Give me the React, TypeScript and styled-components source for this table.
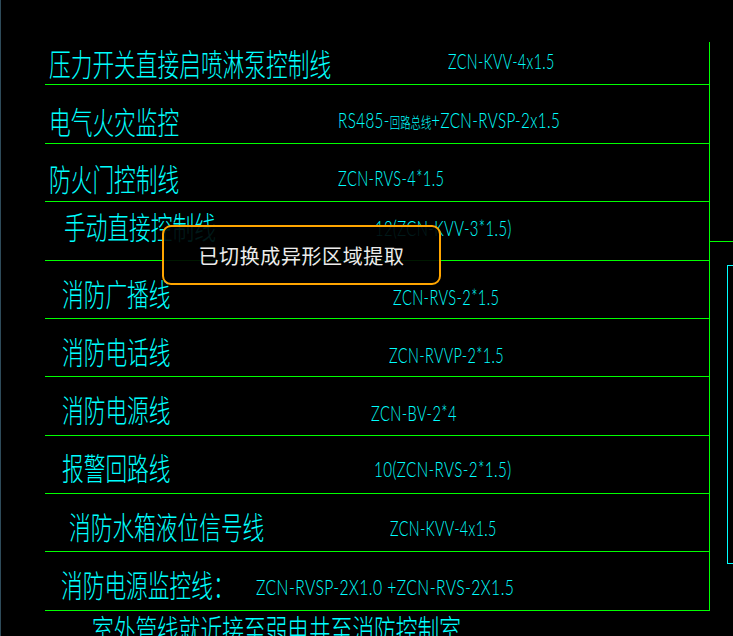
import React from "react";
import styled, { createGlobalStyle } from "styled-components";

const Global = createGlobalStyle`
  html, body { margin: 0; padding: 0; background: #000; }
  body { width: 733px; height: 636px; overflow: hidden; }
`;

const CAD_CYAN = "#00ffff";
const CAD_GREEN = "#00ff00";

const Page = styled.div`
  position: relative;
  width: 733px;
  height: 636px;
  box-sizing: border-box;
  background: #000;
  border-left: 1px solid #2e4b5a;
  overflow: hidden;
  display: flex;
`;

const Sheet = styled.div`
  flex: 1;
  display: flex;
  flex-direction: column;
  align-items: flex-start;
  padding-top: 42px;
  margin-left: 44px;
`;

const Board = styled.div`
  display: flex;
  width: 688px;
`;

const Table = styled.div`
  flex: 0 0 665px;
  width: 665px;
  box-sizing: border-box;
  border-right: 1px solid ${CAD_GREEN};
  display: flex;
  flex-direction: column;
`;

const Row = styled.div<{ $h: number; $codeAt: number }>`
  height: ${(p) => p.$h}px;
  box-sizing: border-box;
  border-bottom: 1px solid ${CAD_GREEN};
  display: grid;
  grid-template-columns: ${(p) => p.$codeAt - 45}px 1fr;
  align-items: end;
`;

const Title = styled.span<{ $indent: number; $bottom: number }>`
  display: inline-block;
  justify-self: start;
  margin-left: ${(p) => p.$indent}px;
  margin-bottom: ${(p) => p.$bottom}px;
  font-family: "Noto Sans CJK SC", sans-serif;
  font-weight: 300;
  font-size: 31px;
  line-height: 1;
  color: ${CAD_CYAN};
  white-space: nowrap;
  transform: scaleX(0.7);
  transform-origin: left bottom;
`;

const Code = styled.span<{ $bottom: number; $sx: number }>`
  display: inline-block;
  justify-self: start;
  margin-bottom: ${(p) => p.$bottom}px;
  font-family: "Lato", "Liberation Sans", "Noto Sans CJK SC", sans-serif;
  font-weight: 300;
  font-size: 22px;
  line-height: 1;
  letter-spacing: 0.6px;
  color: ${CAD_CYAN};
  white-space: nowrap;
  transform: scaleX(${(p) => p.$sx});
  transform-origin: left bottom;
`;

const CodeHan = styled.span`
  font-family: "Noto Sans CJK SC", sans-serif;
  font-size: 15px;
  letter-spacing: 0;
`;

const Side = styled.div`
  flex: 0 0 23px;
  display: flex;
  flex-direction: column;
  align-items: flex-start;
`;

const Ledge = styled.div`
  align-self: stretch;
  margin-top: 199px;
  height: 0;
  border-top: 1px solid ${CAD_GREEN};
`;

const Frame = styled.div`
  margin-top: 23px;
  margin-left: 17px;
  width: 12px;
  height: 299px;
  box-sizing: border-box;
  border: 1px solid ${CAD_CYAN};
  border-right: none;
`;

const Note = styled(Title)`
  margin-top: 2px;
`;

const Toast = styled.div`
  position: absolute;
  left: 161px;
  top: 225px;
  width: 279px;
  height: 60px;
  box-sizing: border-box;
  border: 2px solid #ffa500;
  border-radius: 9px;
  background: rgba(0, 0, 0, 0.9);
  display: flex;
  align-items: center;
  justify-content: center;
  font-family: "Noto Sans CJK SC", sans-serif;
  font-size: 20px;
  letter-spacing: 0.6px;
  color: #ececec;
`;

type RowData = {
  title: string;
  code: React.ReactNode;
  indent: number;
  codeAt: number;
  tb: number;
  cb: number;
  h: number;
  sx: number;
};

const rows: RowData[] = [
  { title: "压力开关直接启喷淋泵控制线", code: "ZCN-KVV-4x1.5", indent: 4, codeAt: 448, tb: 6, cb: 12, h: 43, sx: 0.65 },
  {
    title: "电气火灾监控",
    code: (
      <>
        RS485-<CodeHan>回路总线</CodeHan>+ZCN-RVSP-2x1.5
      </>
    ),
    indent: 4,
    codeAt: 338,
    tb: 7,
    cb: 12,
    h: 59,
    sx: 0.69,
  },
  { title: "防火门控制线", code: "ZCN-RVS-4*1.5", indent: 4, codeAt: 338, tb: 8, cb: 12, h: 58, sx: 0.665 },
  { title: "手动直接控制线", code: "12(ZCN-KVV-3*1.5)", indent: 19, codeAt: 375, tb: 19, cb: 21, h: 59, sx: 0.675 },
  { title: "消防广播线", code: "ZCN-RVS-2*1.5", indent: 17, codeAt: 393, tb: 10, cb: 10, h: 58, sx: 0.665 },
  { title: "消防电话线", code: "ZCN-RVVP-2*1.5", indent: 17, codeAt: 389, tb: 10, cb: 10, h: 58, sx: 0.656 },
  { title: "消防电源线", code: "ZCN-BV-2*4", indent: 17, codeAt: 371, tb: 11, cb: 11, h: 59, sx: 0.667 },
  { title: "报警回路线", code: "10(ZCN-RVS-2*1.5)", indent: 17, codeAt: 374, tb: 11, cb: 13, h: 58, sx: 0.69 },
  { title: "消防水箱液位信号线", code: "ZCN-KVV-4x1.5", indent: 24, codeAt: 390, tb: 10, cb: 12, h: 58, sx: 0.65 },
  { title: "消防电源监控线：", code: "ZCN-RVSP-2X1.0 +ZCN-RVS-2X1.5", indent: 16, codeAt: 256, tb: 11, cb: 12, h: 59, sx: 0.715 },
];

export default function App() {
  return (
    <>
      <Global />
      <Page>
        <Sheet>
          <Board>
            <Table>
              {rows.map((r) => (
                <Row key={r.title} $h={r.h} $codeAt={r.codeAt}>
                  <Title $indent={r.indent} $bottom={r.tb}>
                    {r.title}
                  </Title>
                  <Code $bottom={r.cb} $sx={r.sx}>
                    {r.code}
                  </Code>
                </Row>
              ))}
            </Table>
            <Side>
              <Ledge />
              <Frame />
            </Side>
          </Board>
          <Note $indent={47} $bottom={0}>
            室外管线就近接至弱电井至消防控制室
          </Note>
        </Sheet>
        <Toast>已切换成异形区域提取</Toast>
      </Page>
    </>
  );
}
